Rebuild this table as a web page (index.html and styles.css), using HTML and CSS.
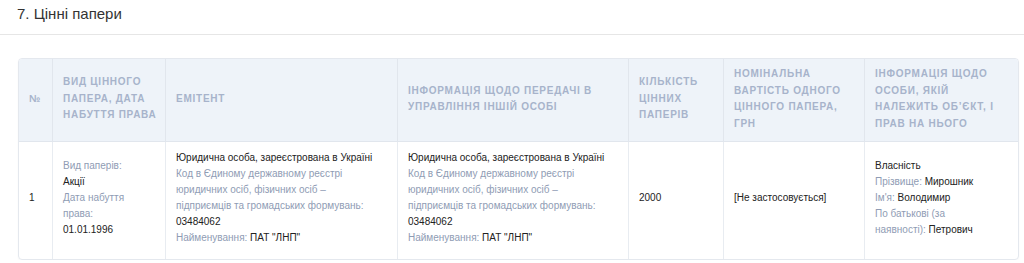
FILE: index.html
```html
<!DOCTYPE html>
<html lang="uk">
<head>
<meta charset="utf-8">
<link rel="stylesheet" href="styles.css">
</head>
<body>
<h2 class="title">7. Цінні папери</h2>
<div class="wrap">
<table class="tbl">
<colgroup>
<col style="width:33px"><col style="width:113px"><col style="width:232px"><col style="width:231px"><col style="width:95px"><col style="width:141px"><col style="width:154px">
</colgroup>
<thead>
<tr>
<th class="num">№</th>
<th>Вид цінного папера, дата набуття права</th>
<th>Емітент</th>
<th>Інформація щодо передачі в управління іншій особі</th>
<th>Кількість цінних паперів</th>
<th>Номінальна вартість одного цінного папера, грн</th>
<th>Інформація щодо особи, якій належить об’єкт, і прав на нього</th>
</tr>
</thead>
<tbody>
<tr>
<td class="num">1</td>
<td><span class="lbl">Вид паперів:</span><br>Акції<br><span class="lbl">Дата набуття права:</span><br>01.01.1996</td>
<td>Юридична особа, зареєстрована в Україні<br><span class="lbl">Код в Єдиному державному реєстрі юридичних осіб, фізичних осіб –<br>підприємців та громадських формувань:</span><br>03484062<br><span class="lbl">Найменування:</span> ПАТ "ЛНП"</td>
<td>Юридична особа, зареєстрована в Україні<br><span class="lbl">Код в Єдиному державному реєстрі юридичних осіб, фізичних осіб –<br>підприємців та громадських формувань:</span><br>03484062<br><span class="lbl">Найменування:</span> ПАТ "ЛНП"</td>
<td>2000</td>
<td>[Не застосовується]</td>
<td>Власність<br><span class="lbl">Прізвище:</span> Мирошник<br><span class="lbl">Ім'я:</span> Володимир<br><span class="lbl">По батькові (за наявності):</span> Петрович</td>
</tr>
</tbody>
</table>
</div>
</body>
</html>
```
FILE: styles.css
```css
html, body { margin: 0; padding: 0; background: #fff; }
body { font-family: "Liberation Sans", Arial, sans-serif; color: #222; }
.title {
  margin: 0;
  padding: 4px 17px 0;
  height: 30px;
  font-size: 15px;
  font-weight: normal;
  color: #333;
  line-height: 20px;
  border-bottom: 1px solid #e6e6e6;
}
.wrap { padding: 23px 7px 0 18px; }
.tbl {
  width: 999px;
  table-layout: fixed;
  border-collapse: separate;
  border-spacing: 0;
  border: 1px solid #e4e8ee;
  border-radius: 4px;
  overflow: hidden;
  box-shadow: 0 1px 2px rgba(0,0,0,0.04);
}
.tbl th {
  background: #eef3f9;
  color: #a7b3cb;
  font-size: 10px;
  font-weight: bold;
  letter-spacing: 0.75px;
  text-transform: uppercase;
  text-align: left;
  line-height: 16.5px;
  padding: 7px 5px 9px 10px;
  height: 66px;
  vertical-align: middle;
  border-left: 1px solid #e1e6ed;
  border-bottom: 1px solid #e1e6ed;
}
.tbl th:first-child, .tbl td:first-child { border-left: none; }
.tbl th.num { letter-spacing: 0; }
.tbl td {
  font-size: 10px;
  line-height: 16px;
  padding: 8px 22px 13px 10px;
  vertical-align: middle;
  border-left: 1px solid #e8ecf1;
  color: #222;
}
.lbl { color: #8f9cb4; }
```
